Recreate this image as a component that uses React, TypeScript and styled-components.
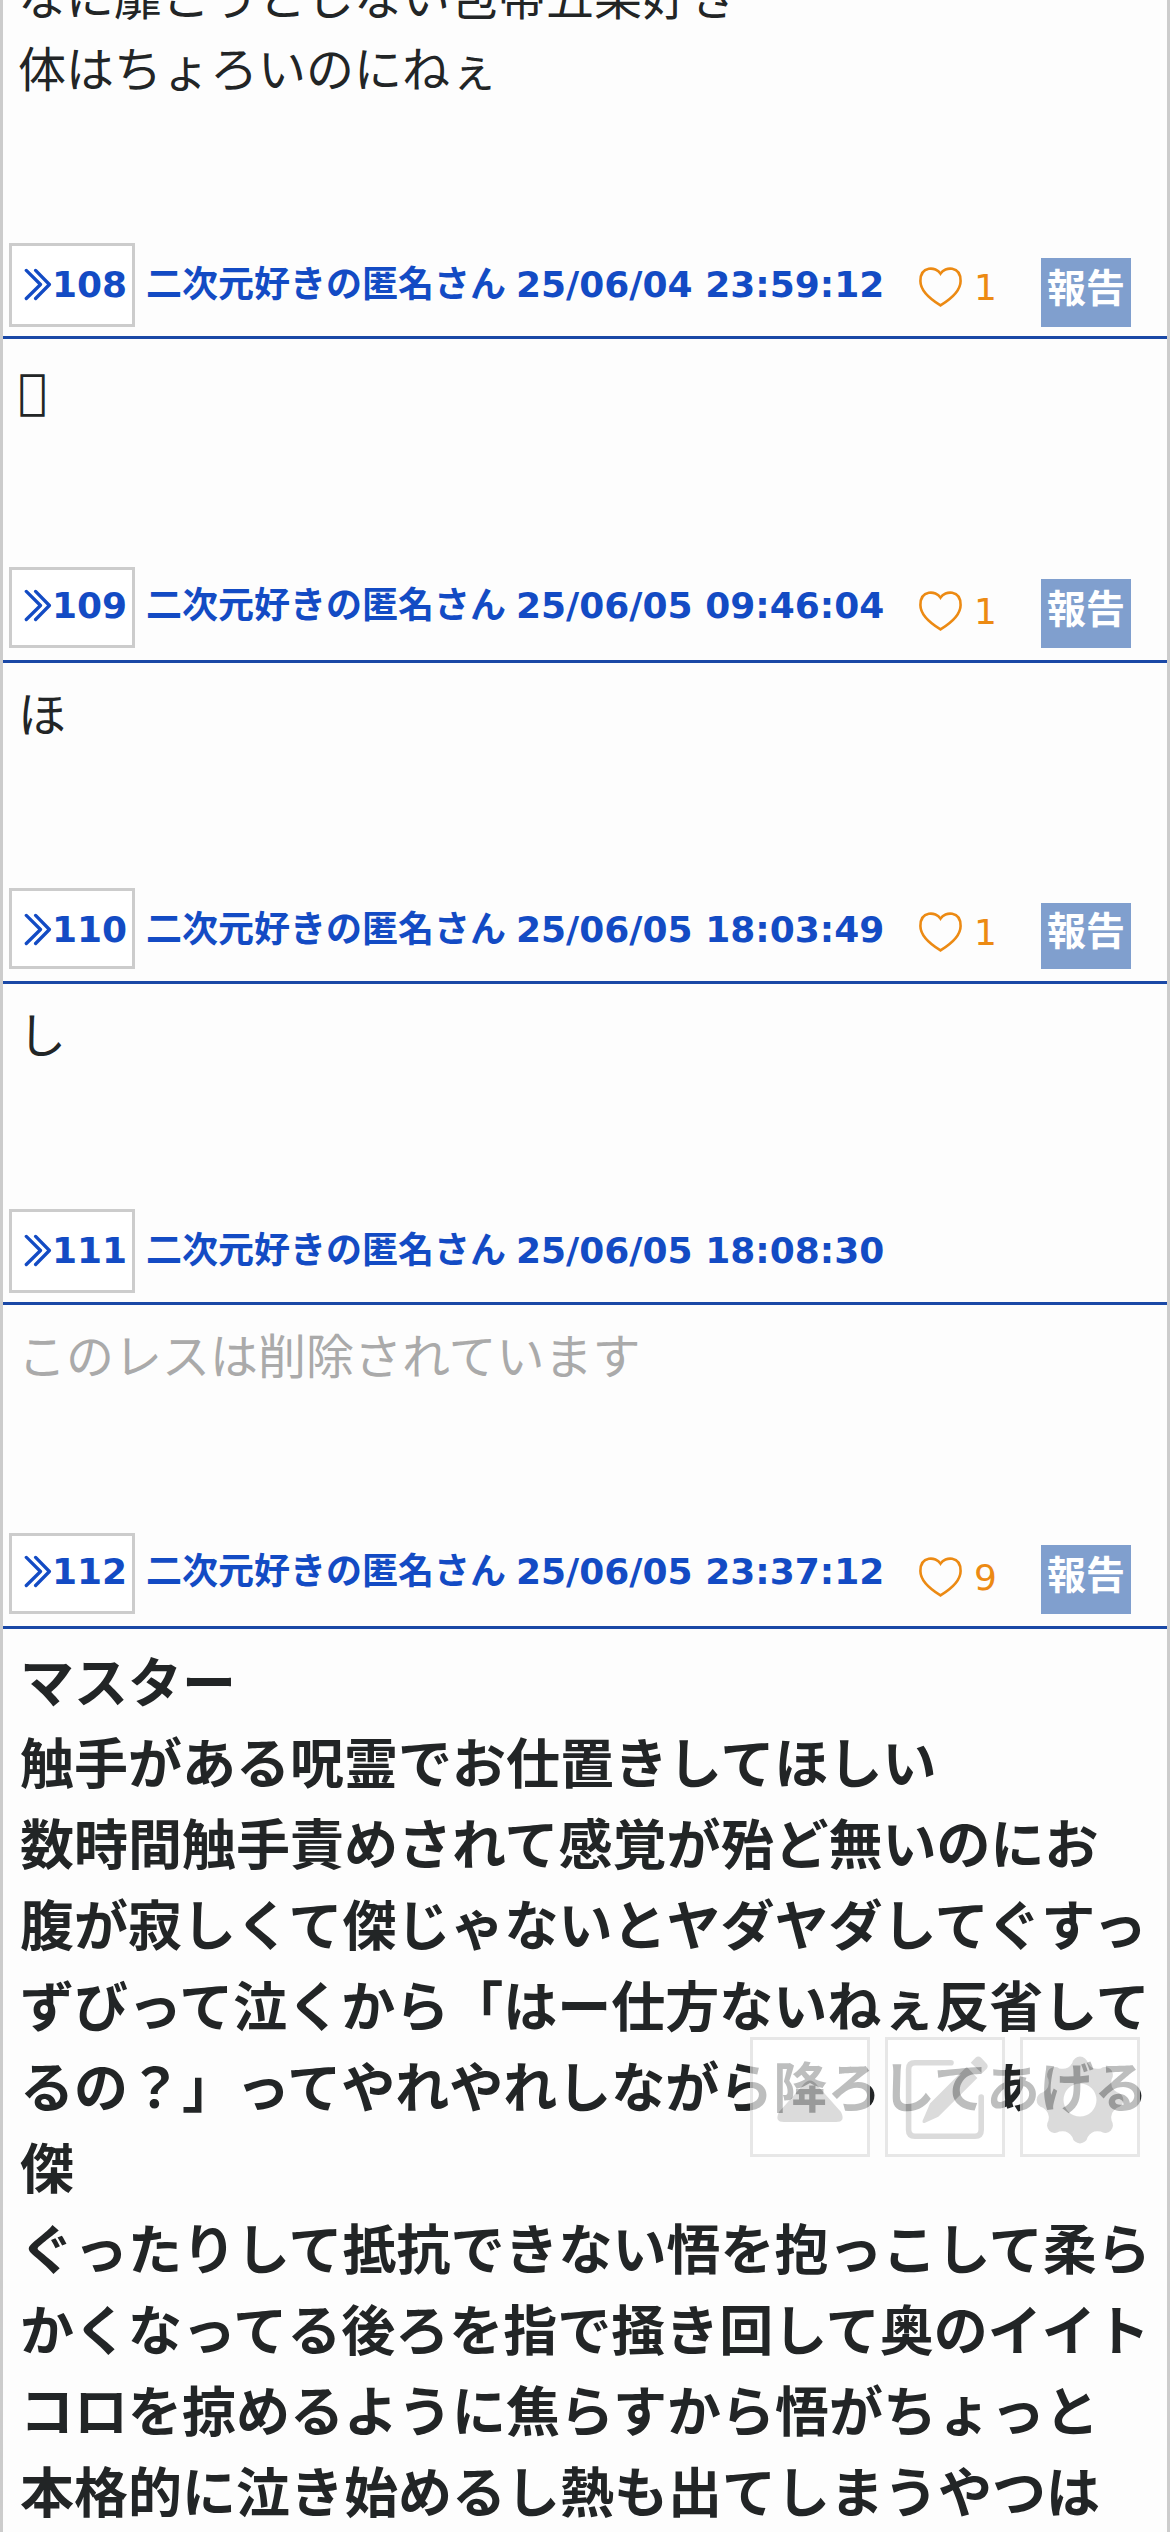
import React from 'react';
import styled, { createGlobalStyle } from 'styled-components';

const GlobalStyle = createGlobalStyle`
  * { box-sizing: border-box; }
  body {
    margin: 0;
    background: #fdfdfd;
    color: #222526;
    font-family: "DejaVu Sans", "Noto Sans CJK JP", sans-serif;
  }
`;

const Page = styled.main`
  width: 1170px;
  height: 2532px;
  overflow: hidden;
  border: solid #cccccc;
  border-width: 0 3px;
`;

const PostBody = styled.div<{ $height?: number }>`
  height: ${p => (p.$height ? `${p.$height}px` : 'auto')};
  padding: 16px 0 0 15px;
  font-size: 48px;
  line-height: 72px;
  white-space: nowrap;
`;

const LeadBody = styled(PostBody)`
  margin-top: -38px;
  padding-top: 0;
`;

const Deleted = styled.span`
  color: #aaaaaa;
`;

const Strong = styled.p`
  margin: -1px 0 0 2px;
  font-size: 54px;
  line-height: 81px;
  font-weight: 700;
`;

const Header = styled.header`
  display: flex;
  align-items: flex-start;
  height: 96px;
  padding-left: 6px;
  border-bottom: 3px solid #1a48a6;
  color: #134bc4;
  font-size: 36px;
  line-height: 54px;
  font-weight: 700;
  white-space: nowrap;
`;

const NumberBox = styled.a<{ $height: number; $top: number }>`
  display: flex;
  align-items: flex-start;
  width: 126px;
  height: ${p => p.$height}px;
  padding: ${p => p.$top - 3}px 0 0 12px;
  border: 3px solid #cccccc;
  background: #fff;
`;

const Chevron = styled.svg`
  flex: none;
  width: 29px;
  height: 36px;
  margin: 9px -1px 0 0;
`;

const Name = styled.span<{ $top: number }>`
  display: flex;
  gap: 10px;
  width: 768px;
  padding: ${p => p.$top}px 0 0 11px;
`;

const Like = styled.span`
  display: flex;
  gap: 12px;
  width: 132px;
  padding: 18px 0 0 16px;
  color: #ec8a13;
  font-weight: 400;
`;

const HeartIcon = styled.svg`
  width: 43px;
  height: 40px;
  margin-top: 6px;
`;

const Report = styled.button<{ $top: number; $height: number }>`
  width: 90px;
  height: ${p => p.$height}px;
  margin: ${p => p.$top}px 36px 0 auto;
  padding: 0 0 ${p => 84 - p.$height}px;
  border: 0;
  background: #809fce;
  color: #fff;
  font: 700 39px/51px "Noto Sans CJK JP", sans-serif;
`;

const Tools = styled.nav`
  position: fixed;
  left: 750px;
  top: 2037px;
  display: flex;
  gap: 15px;
  opacity: 0.7;
`;

const Tool = styled.button`
  width: 120px;
  height: 120px;
  padding: 0;
  border: 3px solid #dddddd;
  background: #fff;
  color: #cccccc;
  svg { display: block; width: 114px; height: 114px; }
`;

interface PostData {
  no: number;
  date: string;
  likes?: number;
  body: React.ReactNode;
  bodyHeight?: number;
  box: number;
  textTop: number;
}

const posts: PostData[] = [
  { no: 108, date: '25/06/04 23:59:12', likes: 1, body: '\u{10FFFD}', bodyHeight: 228, box: 84, textTop: 15 },
  { no: 109, date: '25/06/05 09:46:04', likes: 1, body: 'ほ', bodyHeight: 225, box: 81, textTop: 12 },
  { no: 110, date: '25/06/05 18:03:49', likes: 1, body: 'し', bodyHeight: 225, box: 81, textTop: 15 },
  { no: 111, date: '25/06/05 18:08:30', body: <Deleted>このレスは削除されています</Deleted>, bodyHeight: 228, box: 84, textTop: 15 },
  {
    no: 112, date: '25/06/05 23:37:12', likes: 9, box: 81, textTop: 12,
    body: (
      <Strong>
        マスター<br />
        触手がある呪霊でお仕置きしてほしい<br />
        数時間触手責めされて感覚が殆ど無いのにお<br />
        腹が寂しくて傑じゃないとヤダヤダしてぐすっ<br />
        ずびって泣くから「はー仕方ないねぇ反省して<br />
        るの？」ってやれやれしながら降ろしてあげる<br />
        傑<br />
        ぐったりして抵抗できない悟を抱っこして柔ら<br />
        かくなってる後ろを指で掻き回して奥のイイト<br />
        コロを掠めるように焦らすから悟がちょっと<br />
        本格的に泣き始めるし熱も出てしまうやつは
      </Strong>
    ),
  },
];

// Outline of an eight-toothed gear: round tips joined by shallow valleys.
function gearPath(cx: number, cy: number) {
  const at = (r: number, deg: number) => {
    const a = (deg * Math.PI) / 180;
    return `${(cx + r * Math.sin(a)).toFixed(2)} ${(cy - r * Math.cos(a)).toFixed(2)}`;
  };
  let d = `M${at(37.8, -11.7)}`;
  for (let i = 0; i < 8; i++) {
    const a = i * 45;
    d += `A7.8 7.8 0 0 1 ${at(37.8, a + 11.7)}Q${at(32, a + 22.5)} ${at(37.8, a + 33.3)}`;
  }
  return `${d}ZM${cx} ${cy - 16.5}a16.5 16.5 0 1 0 0 33a16.5 16.5 0 1 0 0-33Z`;
}

function Post({ post }: { post: PostData }) {
  const { box, textTop } = post;
  return (
    <article>
      <Header>
        <NumberBox $height={box} $top={textTop}>
          <Chevron viewBox="0 0 29 36" fill="none" stroke="currentColor" strokeWidth="3.3" strokeLinecap="round" strokeLinejoin="round">
            <path d="M2.3 3.4 16.5 17.5 2.3 31.5M11.6 3.4 25.4 17.5 11.6 31.5" />
          </Chevron>
          {post.no}
        </NumberBox>
        <Name $top={textTop}>
          <span>二次元好きの匿名さん</span>
          <time>{post.date}</time>
        </Name>
        {post.likes !== undefined && (
          <>
            <Like>
              <HeartIcon viewBox="0 0 43 40" fill="none" stroke="currentColor" strokeWidth="2.6">
                <path d="M21.5 6.6C17 -0.6 1.4 -1.4 1.4 14C1.4 25 13.5 33.5 21.5 38.4C29.5 33.5 41.6 25 41.6 14C41.6 -1.4 26 -0.6 21.5 6.6Z" />
              </HeartIcon>
              {post.likes}
            </Like>
            <Report $top={textTop} $height={box - textTop}>報告</Report>
          </>
        )}
      </Header>
      <PostBody $height={post.bodyHeight}>{post.body}</PostBody>
    </article>
  );
}

export default function App() {
  return (
    <>
      <GlobalStyle />
      <Page>
        <LeadBody $height={281}>
          なに靡こうとしない包帯五条好き<br />
          体はちょろいのにねぇ
        </LeadBody>
        {posts.map(p => <Post key={p.no} post={p} />)}
      </Page>
      <Tools>
        <Tool>
          <svg viewBox="0 0 114 114" fill="currentColor">
            <path d="M50 45q7-9 14 0l24 27q5 10-5 10H31q-10 0-5-10Z" />
          </svg>
        </Tool>
        <Tool>
          <svg viewBox="0 0 114 114" fill="currentColor">
            <path d="M63 22.8H27q-6.4 0-6.4 6.4v60.6q0 6.4 6.4 6.4h60q6.2 0 6.2-6.4V57" fill="none" stroke="currentColor" strokeWidth="5.6" strokeLinecap="round" />
            <path d="M87.5 17.8q2.8-2.4 5.6 0l5.6 6q2 2.6 0 5L94 33.3 82.7 22.8ZM78.7 26.7 89.3 38 50.3 76.8 36.5 83q-2.4 0.6-2-2L42 63.5Z" />
          </svg>
        </Tool>
        <Tool>
          <svg viewBox="0 0 114 114" fill="currentColor">
            <path fillRule="evenodd" d={gearPath(57, 60)} />
          </svg>
        </Tool>
      </Tools>
    </>
  );
}
